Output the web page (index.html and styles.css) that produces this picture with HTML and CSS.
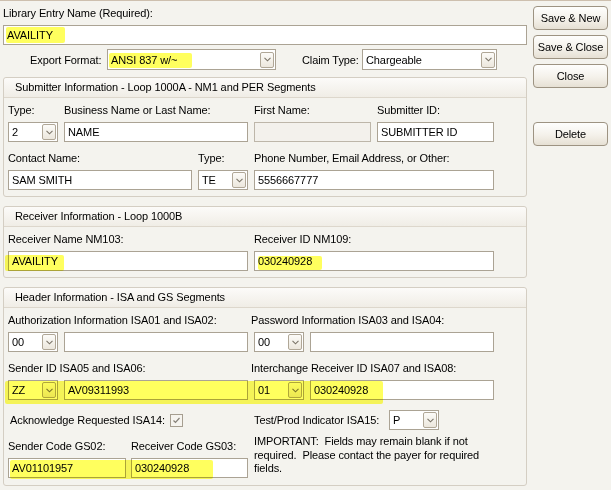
FILE: index.html
```html
<!DOCTYPE html>
<html>
<head>
<meta charset="utf-8">
<link rel="stylesheet" href="styles.css">
</head>
<body>
<div class="page">
  <div class="main">
    <div class="lbl">Library Entry Name (Required):</div>
    <div class="field name-field">AVAILITY</div>
    <div class="fmt-row">
      <div class="lbl fmt-lbl">Export Format:</div>
      <div class="field select w169 tall"><span>ANSI 837 w/~</span><span class="arrow"><svg width="7" height="5" viewBox="0 0 7 5"><path d="M0.5 0.8 L3.5 3.8 L6.5 0.8" fill="none" stroke="#7b7468" stroke-width="1.1"/></svg></span></div>
      <div class="lbl claim-lbl">Claim Type:</div>
      <div class="field select w135 tall"><span>Chargeable</span><span class="arrow"><svg width="7" height="5" viewBox="0 0 7 5"><path d="M0.5 0.8 L3.5 3.8 L6.5 0.8" fill="none" stroke="#7b7468" stroke-width="1.1"/></svg></span></div>
    </div>

    <div class="group">
      <div class="group-head">Submitter Information - Loop 1000A - NM1 and PER Segments</div>
      <div class="group-body">
        <div class="row">
          <div class="cell w50"><div class="lbl">Type:</div><div class="field select"><span>2</span><span class="arrow"><svg width="7" height="5" viewBox="0 0 7 5"><path d="M0.5 0.8 L3.5 3.8 L6.5 0.8" fill="none" stroke="#7b7468" stroke-width="1.1"/></svg></span></div></div>
          <div class="cell w184"><div class="lbl">Business Name or Last Name:</div><div class="field">NAME</div></div>
          <div class="cell w117"><div class="lbl">First Name:</div><div class="field disabled"></div></div>
          <div class="cell w117"><div class="lbl">Submitter ID:</div><div class="field">SUBMITTER ID</div></div>
        </div>
        <div class="row">
          <div class="cell w184"><div class="lbl">Contact Name:</div><div class="field">SAM SMITH</div></div>
          <div class="cell w50"><div class="lbl">Type:</div><div class="field select"><span>TE</span><span class="arrow"><svg width="7" height="5" viewBox="0 0 7 5"><path d="M0.5 0.8 L3.5 3.8 L6.5 0.8" fill="none" stroke="#7b7468" stroke-width="1.1"/></svg></span></div></div>
          <div class="cell w240"><div class="lbl">Phone Number, Email Address, or Other:</div><div class="field">5556667777</div></div>
        </div>
      </div>
    </div>

    <div class="group">
      <div class="group-head">Receiver Information - Loop 1000B</div>
      <div class="group-body">
        <div class="row">
          <div class="cell w240"><div class="lbl">Receiver Name NM103:</div><div class="field">AVAILITY</div></div>
          <div class="cell w240"><div class="lbl">Receiver ID NM109:</div><div class="field">030240928</div></div>
        </div>
      </div>
    </div>

    <div class="group">
      <div class="group-head">Header Information - ISA and GS Segments</div>
      <div class="group-body last">
        <div class="row">
          <div class="cell w240">
            <div class="lbl">Authorization Information ISA01 and ISA02:</div>
            <div class="pair">
              <div class="field select w50"><span>00</span><span class="arrow"><svg width="7" height="5" viewBox="0 0 7 5"><path d="M0.5 0.8 L3.5 3.8 L6.5 0.8" fill="none" stroke="#7b7468" stroke-width="1.1"/></svg></span></div>
              <div class="field w184"></div>
            </div>
          </div>
          <div class="cell w240">
            <div class="lbl shift">Password Information ISA03 and ISA04:</div>
            <div class="pair">
              <div class="field select w50"><span>00</span><span class="arrow"><svg width="7" height="5" viewBox="0 0 7 5"><path d="M0.5 0.8 L3.5 3.8 L6.5 0.8" fill="none" stroke="#7b7468" stroke-width="1.1"/></svg></span></div>
              <div class="field w184"></div>
            </div>
          </div>
        </div>
        <div class="row">
          <div class="cell w240">
            <div class="lbl">Sender ID ISA05 and ISA06:</div>
            <div class="pair">
              <div class="field select w50"><span>ZZ</span><span class="arrow"><svg width="7" height="5" viewBox="0 0 7 5"><path d="M0.5 0.8 L3.5 3.8 L6.5 0.8" fill="none" stroke="#7b7468" stroke-width="1.1"/></svg></span></div>
              <div class="field w184">AV09311993</div>
            </div>
          </div>
          <div class="cell w240">
            <div class="lbl shift">Interchange Receiver ID ISA07 and ISA08:</div>
            <div class="pair">
              <div class="field select w50"><span>01</span><span class="arrow"><svg width="7" height="5" viewBox="0 0 7 5"><path d="M0.5 0.8 L3.5 3.8 L6.5 0.8" fill="none" stroke="#7b7468" stroke-width="1.1"/></svg></span></div>
              <div class="field w184">030240928</div>
            </div>
          </div>
        </div>
        <div class="bottom">
          <div class="bcol">
            <div class="ack-row">
              <span class="ack-lbl">Acknowledge Requested ISA14:</span>
              <span class="check"><svg width="11" height="11" viewBox="0 0 11 11"><path d="M2.5 5.5 L4.5 7.5 L8.5 3" fill="none" stroke="#858078" stroke-width="1.2"/></svg></span>
            </div>
            <div class="gs-row">
              <div class="cell w118"><div class="lbl">Sender Code GS02:</div><div class="field">AV01101957</div></div>
              <div class="cell w117"><div class="lbl">Receiver Code GS03:</div><div class="field">030240928</div></div>
            </div>
          </div>
          <div class="bcol">
            <div class="test-row">
              <span class="test-lbl">Test/Prod Indicator ISA15:</span>
              <div class="field select w50"><span>P</span><span class="arrow"><svg width="7" height="5" viewBox="0 0 7 5"><path d="M0.5 0.8 L3.5 3.8 L6.5 0.8" fill="none" stroke="#7b7468" stroke-width="1.1"/></svg></span></div>
            </div>
            <div class="note">IMPORTANT:&nbsp; Fields may remain blank if not<br>required.&nbsp; Please contact the payer for required<br>fields.</div>
          </div>
        </div>
      </div>
    </div>
  </div>

  <div class="buttons">
    <div class="btn">Save &amp; New</div>
    <div class="btn">Save &amp; Close</div>
    <div class="btn">Close</div>
    <div class="btn delete">Delete</div>
  </div>

  <div class="hl hl-name"></div>
  <div class="hl hl-fmt"></div>
  <div class="hl hl-rname"></div>
  <div class="hl hl-rid"></div>
  <div class="hl hl-sender"></div>
  <div class="hl hl-gs"></div>
</div>
</body>
</html>
```
FILE: styles.css
```css
* { box-sizing: border-box; }
html, body { margin: 0; padding: 0; }
body {
  background: #f4f3ee;
  font-family: "Liberation Sans", Arial, sans-serif;
  font-size: 11px;
  letter-spacing: -0.1px;
  color: #000;
}
.page {
  position: relative;
  width: 611px;
  height: 490px;
  border-top: 1px solid #cdbfae;
  display: flex;
  align-items: flex-start;
  overflow: hidden;
}
.main {
  margin-left: 3px;
  width: 524px;
  padding-top: 5px;
}
.lbl {
  height: 14px;
  line-height: 14px;
  white-space: nowrap;
}
.field {
  height: 20px;
  border: 1px solid #aba394;
  background: #fff;
  padding-left: 3px;
  display: flex;
  align-items: center;
  white-space: nowrap;
  overflow: hidden;
}
.field.tall { height: 21px; }
.field.disabled { background: #f3f1ec; border-color: #bdb6a9; }
.select {
  justify-content: space-between;
  padding-right: 1px;
}
.arrow {
  width: 14px;
  height: 16px;
  border: 1px solid #b0a797;
  border-radius: 2px;
  background: linear-gradient(#fcfbf8, #ece7dd);
  display: flex;
  align-items: center;
  justify-content: center;
  flex: none;
}
.name-field { margin-top: 5px; width: 524px; }
.fmt-row {
  display: flex;
  align-items: center;
  margin-top: 4px;
}
.fmt-lbl { width: 104px; padding-left: 27px; }
.claim-lbl { width: 60px; margin-left: 26px; padding-left: 0; }
.w50 { width: 50px; flex: none; }
.w117 { width: 117px; flex: none; }
.w118 { width: 118px; flex: none; }
.w135 { width: 135px; flex: none; }
.w169 { width: 169px; flex: none; }
.w184 { width: 184px; flex: none; }
.w240 { width: 240px; flex: none; }

.group {
  margin-top: 7px;
  border: 1px solid #d4cec3;
  border-radius: 3px;
}
.group + .group { margin-top: 9px; }
.group-head {
  height: 20px;
  line-height: 19px;
  padding-left: 11px;
  border-bottom: 1px solid #ddd7cc;
  background: linear-gradient(#fcfbf9, #f0ede6);
  border-radius: 3px 3px 0 0;
}
.group-body { padding: 5px 4px 6px; }
.group-body.last { padding-bottom: 7px; }
.row { display: flex; gap: 6px; }
.row + .row { margin-top: 9px; }
.cell { display: flex; flex-direction: column; }
.cell .lbl { margin-bottom: 5px; }
.lbl.shift { margin-left: -3px; }
.pair { display: flex; gap: 6px; }

.bottom { display: flex; gap: 6px; margin-top: 10px; }
.bcol { width: 240px; display: flex; flex-direction: column; }
.ack-row { height: 20px; display: flex; align-items: center; padding-left: 2px; }
.ack-lbl { width: 160px; white-space: nowrap; }
.check {
  width: 13px;
  height: 13px;
  border: 1px solid #a69e90;
  background: #f6f4ef;
  display: flex;
  align-items: center;
  justify-content: center;
}
.gs-row { display: flex; gap: 5px; margin-top: 9px; }
.test-row { height: 20px; display: flex; align-items: center; }
.test-lbl { width: 135px; white-space: nowrap; }
.note { margin-top: 5px; line-height: 13.5px; white-space: nowrap; }

.buttons {
  margin-left: 6px;
  width: 75px;
  display: flex;
  flex-direction: column;
  padding-top: 5px;
}
.btn {
  height: 24px;
  border: 1px solid #9d9382;
  border-radius: 4px;
  background: linear-gradient(#fefefd, #f4f1ea 55%, #e6e0d4);
  display: flex;
  align-items: center;
  justify-content: center;
  margin-bottom: 5px;
  white-space: nowrap;
}
.btn.delete { margin-top: 29px; }

.hl {
  position: absolute;
  background: #ffff5e;
  mix-blend-mode: multiply;
  border-radius: 2px;
  filter: blur(0.4px);
}
.hl-name { left: 6px; top: 26px; width: 59px; height: 16px; }
.hl-fmt { left: 109px; top: 52px; width: 83px; height: 15px; }
.hl-rname { left: 5px; top: 254px; width: 59px; height: 16px; }
.hl-rid { left: 258px; top: 255px; width: 64px; height: 14px; }
.hl-sender { left: 5px; top: 380px; width: 378px; height: 23px; }
.hl-gs { left: 10px; top: 459px; width: 203px; height: 19px; }
```
